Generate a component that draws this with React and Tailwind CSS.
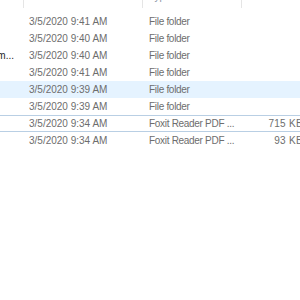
import React from 'react';

const rows = [
  { name: '', date: '3/5/2020 9:41 AM', type: 'File folder', size: '' },
  { name: '', date: '3/5/2020 9:40 AM', type: 'File folder', size: '' },
  { name: 'm...', date: '3/5/2020 9:40 AM', type: 'File folder', size: '' },
  { name: '', date: '3/5/2020 9:41 AM', type: 'File folder', size: '' },
  { name: '', date: '3/5/2020 9:39 AM', type: 'File folder', size: '', hover: true },
  { name: '', date: '3/5/2020 9:39 AM', type: 'File folder', size: '' },
  { name: '', date: '3/5/2020 9:34 AM', type: 'Foxit Reader PDF ...', size: '715 KB', focus: true },
  { name: '', date: '3/5/2020 9:34 AM', type: 'Foxit Reader PDF ...', size: '93 KB' },
];

const App = () => {
  return (
    <div
      className="w-[300px] h-[300px] overflow-hidden bg-white text-[10px]"
      style={{ fontFamily: '"Liberation Sans", Arial, sans-serif' }}
    >
      <div className="w-[304px]">
        {/* header, mostly scrolled off */}
        <div className="flex h-[13px] overflow-hidden">
          <div className="w-[24px] h-[8px] border-r border-[#e5e5e5]"></div>
          <div className="w-[119px] h-[8px] border-r border-[#e5e5e5]"></div>
          <div className="w-[99px] h-[8px] border-r border-[#e5e5e5] pl-[6px] text-[#8a96a6] leading-none">
            <span className="block -mt-[8px]">Type</span>
          </div>
          <div className="flex-1"></div>
        </div>

        {rows.map((row, i) => (
          <div
            key={i}
            className={`flex items-center h-[17px] text-[#6d6d6d] ${
              row.hover ? 'bg-[#e5f3ff]' : ''
            } ${row.focus ? 'border-y border-[#b9cfe4]' : ''}`}
          >
            <div className="w-[24px] flex justify-end pr-[10px] text-[#1e1e1e] whitespace-nowrap">
              {row.name}
            </div>
            <div className="w-[119px] pl-[5px] whitespace-nowrap">{row.date}</div>
            <div className="w-[99px] pl-[6px] whitespace-nowrap tracking-[-0.3px]">{row.type}</div>
            <div className="flex-1 text-right pr-[1px] whitespace-nowrap tracking-[0.3px]">{row.size}</div>
          </div>
        ))}
      </div>
    </div>
  );
};

export default App;
